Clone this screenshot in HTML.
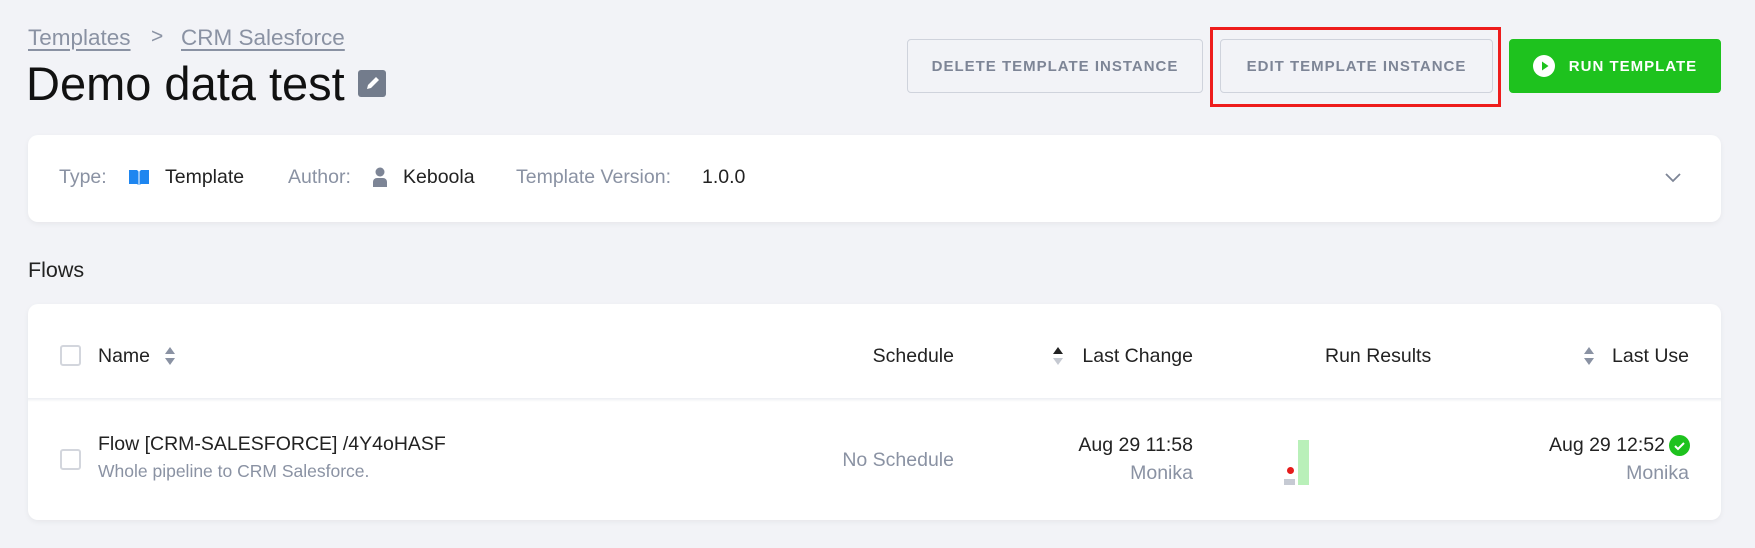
<!DOCTYPE html>
<html><head><meta charset="utf-8"><style>
*{box-sizing:border-box;margin:0;padding:0}
body{width:1755px;height:548px;background:#f2f3f7;font-family:"Liberation Sans",sans-serif;color:#222;position:relative;overflow:hidden}
.a{position:absolute;white-space:nowrap}
.g{color:#8a92a3}
.btn{position:absolute;top:39px;height:54px;border:1px solid #cfd3dc;border-radius:4px;background:#f2f3f7;color:#7d8596;font-size:15px;font-weight:bold;letter-spacing:1px;display:flex;align-items:center;justify-content:center}
.card{position:absolute;left:28px;width:1693px;background:#fff;border-radius:10px;box-shadow:0 2px 6px rgba(0,0,0,.05)}
.cb{position:absolute;width:21px;height:21px;border:2px solid #d3d6dd;border-radius:3px;background:#fff}
.t{font-size:19.5px}
</style></head><body>
<div class="a g" style="left:28px;top:25px;font-size:22.5px;text-decoration:underline;text-underline-offset:4px">Templates</div>
<div class="a g" style="left:151px;top:25px;font-size:21px">&gt;</div>
<div class="a g" style="left:181px;top:25px;font-size:22.5px;text-decoration:underline;text-underline-offset:4px">CRM Salesforce</div>
<div class="a" style="left:26px;top:56px;font-size:47px;color:#111">Demo data test</div>
<div class="a" style="left:358px;top:70px;width:28px;height:27px;background:#737c8c;border-radius:3px">
<svg width="28" height="27" viewBox="0 0 28 27"><path d="M9 19l1-4 8-8 3 3-8 8z" fill="#fff"/></svg></div>

<div class="btn" style="left:907px;width:296px">DELETE TEMPLATE INSTANCE</div>
<div class="btn" style="left:1220px;width:273px">EDIT TEMPLATE INSTANCE</div>
<div class="a" style="left:1210px;top:27px;width:291px;height:80px;border:3px solid #ee1c1c"></div>
<div class="btn" style="left:1509px;width:212px;background:#1ec21e;border-color:#1ec21e;color:#fff">
<svg width="22" height="22" viewBox="0 0 22 22" style="margin-right:14px"><circle cx="11" cy="11" r="11" fill="#fff"/><path d="M9 6.5v9l6.5-4.5z" fill="#1ec21e"/></svg>RUN TEMPLATE</div>

<div class="card" style="top:135px;height:87px"></div>
<div class="a g t" style="left:59px;top:166px">Type:</div>
<svg class="a" style="left:128px;top:169px" width="22" height="17" viewBox="0 0 22 17"><path d="M1 1h8l1.5 1.5V16L9 15H1z M21 1h-8l-1.5 1.5V16L13 15h8z" fill="#1e86f0"/></svg>
<div class="a t" style="left:165px;top:166px">Template</div>
<div class="a g t" style="left:288px;top:166px">Author:</div>
<svg class="a" style="left:372px;top:167px" width="16" height="20" viewBox="0 0 16 20"><circle cx="8" cy="5" r="4.5" fill="#7d8596"/><path d="M1 20v-5a4 4 0 0 1 4-4h6a4 4 0 0 1 4 4v5z" fill="#7d8596"/></svg>
<div class="a t" style="left:403px;top:166px">Keboola</div>
<div class="a g t" style="left:516px;top:166px">Template Version:</div>
<div class="a t" style="left:702px;top:166px">1.0.0</div>
<svg class="a" style="left:1664px;top:172px" width="18" height="11" viewBox="0 0 18 11"><path d="M2 2l7 7 7-7" stroke="#7d8596" stroke-width="1.8" fill="none"/></svg>

<div class="a" style="left:28px;top:258px;font-size:21.5px">Flows</div>

<div class="card" style="top:304px;height:216px"></div>
<div class="a" style="left:28px;top:398px;width:1693px;height:4px;background:linear-gradient(#eceef2,#fff)"></div>
<div class="cb" style="left:60px;top:345px"></div>
<div class="a t" style="left:98px;top:345px">Name</div>
<svg class="a" style="left:164px;top:345px" width="12" height="22" viewBox="0 0 12 22"><path d="M1 9l5-7 5 7z M1 13l5 7 5-7z" fill="#8a92a3"/></svg>
<div class="a t" style="right:801px;top:345px">Schedule</div>
<svg class="a" style="left:1052px;top:345px" width="12" height="22" viewBox="0 0 12 22"><path d="M1 9l5-7 5 7z" fill="#222"/><path d="M1 13l5 7 5-7z" fill="#c5c9d1"/></svg>
<div class="a t" style="right:562px;top:345px">Last Change</div>
<div class="a t" style="left:1325px;top:345px">Run Results</div>
<svg class="a" style="left:1583px;top:345px" width="12" height="22" viewBox="0 0 12 22"><path d="M1 9l5-7 5 7z M1 13l5 7 5-7z" fill="#8a92a3"/></svg>
<div class="a t" style="right:66px;top:345px">Last Use</div>

<div class="cb" style="left:60px;top:449px"></div>
<div class="a t" style="left:98px;top:433px">Flow [CRM-SALESFORCE] /4Y4oHASF</div>
<div class="a g" style="left:98px;top:461px;font-size:17.5px">Whole pipeline to CRM Salesforce.</div>
<div class="a g t" style="right:801px;top:449px">No Schedule</div>
<div class="a t" style="right:562px;top:434px">Aug 29 11:58</div>
<div class="a g t" style="right:562px;top:462px">Monika</div>
<div class="a" style="left:1298px;top:440px;width:11px;height:45px;background:#b9f0b9"></div>
<div class="a" style="left:1287px;top:467px;width:7px;height:7px;border-radius:50%;background:#e51b1b"></div>
<div class="a" style="left:1284px;top:479px;width:11px;height:6px;background:#c6cad3"></div>
<div class="a t" style="right:90px;top:434px">Aug 29 12:52</div>
<svg class="a" style="left:1669px;top:435px" width="21" height="21" viewBox="0 0 21 21"><circle cx="10.5" cy="10.5" r="10.5" fill="#1ec21e"/><path d="M6 11l3 3 6-6" stroke="#fff" stroke-width="2" fill="none"/></svg>
<div class="a g t" style="right:66px;top:462px">Monika</div>
</body></html>
